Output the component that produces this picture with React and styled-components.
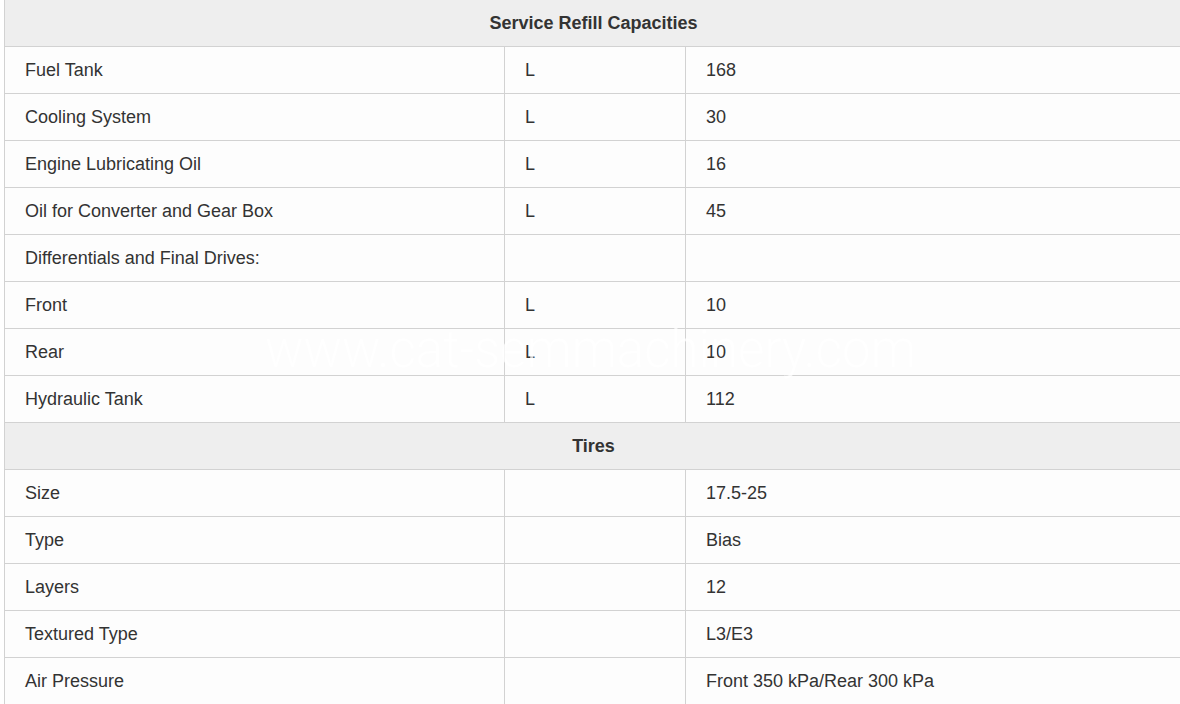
import React from "react";
import styled, { createGlobalStyle } from "styled-components";

const GlobalStyle = createGlobalStyle`
  html, body {
    margin: 0;
    padding: 0;
    background: #ffffff;
    overflow: hidden;
  }
  body {
    font-family: "Liberation Sans", Arial, sans-serif;
    color: #333333;
  }
`;

const Page = styled.div`
  position: relative;
  padding-left: 4px;
  width: 1200px;
`;

const Table = styled.table`
  width: 1179px;
  border-collapse: collapse;
  table-layout: fixed;
  margin-top: -1px;
  font-size: 18px;
  line-height: 20px;
`;

const HeadCell = styled.th`
  height: 46px;
  padding: 0;
  background: #eeeeee;
  border: 1px solid #d2d2d2;
  font-weight: bold;
  text-align: center;
  color: #333333;
`;

const Cell = styled.td`
  height: 46px;
  padding: 0 20px;
  background: #fdfdfd;
  border: 1px solid #d2d2d2;
  color: #333333;
  vertical-align: middle;
`;

const Watermark = styled.div`
  position: absolute;
  left: 265px;
  top: 321px;
  font-family: Roboto, "Open Sans", sans-serif;
  font-weight: 300;
  font-size: 51px;
  line-height: 60px;
  color: rgba(255, 255, 255, 0.75);
  white-space: nowrap;
  pointer-events: none;
`;

const sections = [
  {
    title: "Service Refill Capacities",
    rows: [
      ["Fuel Tank", "L", "168"],
      ["Cooling System", "L", "30"],
      ["Engine Lubricating Oil", "L", "16"],
      ["Oil for Converter and Gear Box", "L", "45"],
      ["Differentials and Final Drives:", "", ""],
      ["Front", "L", "10"],
      ["Rear", "L", "10"],
      ["Hydraulic Tank", "L", "112"],
    ],
  },
  {
    title: "Tires",
    rows: [
      ["Size", "", "17.5-25"],
      ["Type", "", "Bias"],
      ["Layers", "", "12"],
      ["Textured Type", "", "L3/E3"],
      ["Air Pressure", "", "Front 350 kPa/Rear 300 kPa"],
    ],
  },
];

const App = () => {
  return (
    <Page>
      <GlobalStyle />
      <Table>
        <colgroup>
          <col style={{ width: 500 }} />
          <col style={{ width: 181 }} />
          <col />
        </colgroup>
        <tbody>
          {sections.map((section) => (
            <React.Fragment key={section.title}>
              <tr>
                <HeadCell colSpan={3}>{section.title}</HeadCell>
              </tr>
              {section.rows.map((row) => (
                <tr key={row[0]}>
                  <Cell>{row[0]}</Cell>
                  <Cell>{row[1]}</Cell>
                  <Cell>{row[2]}</Cell>
                </tr>
              ))}
            </React.Fragment>
          ))}
        </tbody>
      </Table>
      <Watermark>www.cat-semmachinery.com</Watermark>
    </Page>
  );
};

export default App;
